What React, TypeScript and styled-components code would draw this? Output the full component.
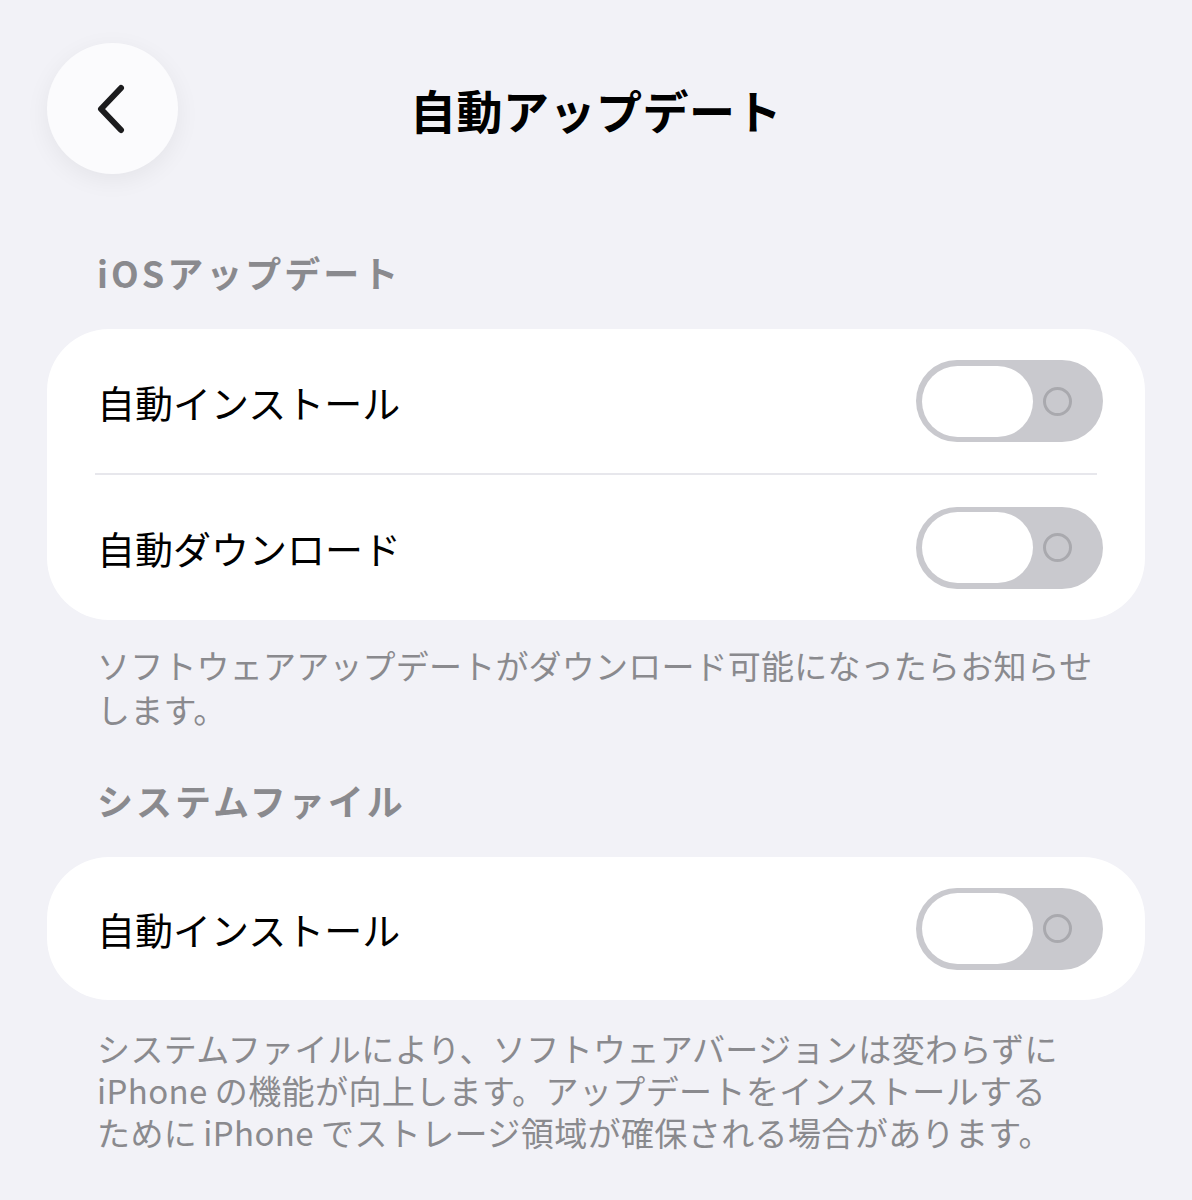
import React from 'react';
import styled, { createGlobalStyle } from 'styled-components';

const GlobalStyle = createGlobalStyle`
  body {
    margin: 0;
    background: #f2f2f7;
    font-family: "Noto Sans CJK JP", "Noto Sans", sans-serif;
    -webkit-font-smoothing: antialiased;
  }
`;

const Page = styled.div`
  width: 1192px;
  min-height: 1200px;
  box-sizing: border-box;
  padding: 43px 47px 40px;
  background: #f2f2f7;
`;

const Header = styled.header`
  display: grid;
  grid-template-columns: 131px 1fr 131px;
  align-items: center;
  height: 131px;
`;

const BackButton = styled.button`
  width: 131px;
  height: 131px;
  border-radius: 50%;
  border: none;
  background: #fbfbfd;
  box-shadow: 0 6px 24px rgba(0, 0, 0, 0.06);
  display: flex;
  align-items: center;
  justify-content: center;
  padding: 0;
  padding-right: 4px;
  cursor: pointer;
`;

const Title = styled.h1`
  margin: 0;
  text-align: center;
  font-size: 46px;
  font-weight: 700;
  color: #000;
  letter-spacing: 0.5px;
`;

const SectionHeader = styled.h2<{ $top: number }>`
  margin: ${(p) => p.$top}px 0 33px;
  padding-left: 50px;
  font-size: 36px;
  line-height: 48px;
  font-weight: 600;
  color: #8a8a8e;
  letter-spacing: 3px;
`;

const Card = styled.div`
  background: #fff;
  border-radius: 62px;
  overflow: hidden;
`;

const Row = styled.div<{ $h: number }>`
  height: ${(p) => p.$h}px;
  display: flex;
  align-items: center;
  justify-content: space-between;
  padding: 0 42px 0 50px;
`;

const Label = styled.span`
  font-size: 38px;
  color: #000;
`;

const Divider = styled.div`
  height: 2px;
  margin: 0 48px;
  background: #e7e7ec;
`;

const Track = styled.div`
  width: 187px;
  height: 82px;
  border-radius: 41px;
  background: #c9c9ce;
  display: flex;
  align-items: center;
  justify-content: space-between;
  padding: 0 31px 0 6px;
  box-sizing: border-box;
`;

const Thumb = styled.div`
  width: 111px;
  height: 71px;
  border-radius: 36px;
  background: #fff;
`;

const OffMark = styled.span`
  width: 23px;
  height: 23px;
  border-radius: 50%;
  border: 3px solid #a9a9ae;
`;

const Footer = styled.p<{ $lh: number; $top: number; $ls: number }>`
  margin: ${(p) => p.$top}px 0 0;
  padding-left: 50px;
  font-size: 33px;
  line-height: ${(p) => p.$lh}px;
  letter-spacing: ${(p) => p.$ls}px;
  color: #8a8a8e;
  white-space: nowrap;
`;

const Latin = styled.span<{ $before?: boolean }>`
  margin-left: ${(p) => (p.$before ? '6px' : '0')};
  margin-right: 7px;
`;

const Toggle: React.FC = () => (
  <Track>
    <Thumb />
    <OffMark />
  </Track>
);

const App: React.FC = () => (
  <>
    <GlobalStyle />
    <Page>
      <Header>
        <BackButton aria-label="戻る">
          <svg width="32" height="50" viewBox="0 0 32 50" fill="none">
            <path d="M26 4 L6 25 L26 46" stroke="#1c1c1e" strokeWidth="6" strokeLinecap="round" strokeLinejoin="round" />
          </svg>
        </BackButton>
        <Title>自動アップデート</Title>
        <div />
      </Header>

      <SectionHeader $top={74}>iOSアップデート</SectionHeader>
      <Card>
        <Row $h={144}>
          <Label>自動インストール</Label>
          <Toggle />
        </Row>
        <Divider />
        <Row $h={145}>
          <Label>自動ダウンロード</Label>
          <Toggle />
        </Row>
      </Card>
      <Footer $lh={44} $top={23} $ls={0.2}>
        ソフトウェアアップデートがダウンロード可能になったらお知らせ
        <br />
        します。
      </Footer>

      <SectionHeader $top={45}>システムファイル</SectionHeader>
      <Card>
        <Row $h={143}>
          <Label>自動インストール</Label>
          <Toggle />
        </Row>
      </Card>
      <Footer $lh={42} $top={27} $ls={0.4}>
        システムファイルにより、ソフトウェアバージョンは変わらずに
        <br />
        <Latin>iPhone</Latin>の機能が向上します。アップデートをインストールする
        <br />
        ために<Latin $before>iPhone</Latin>でストレージ領域が確保される場合があります。
      </Footer>
    </Page>
  </>
);

export default App;
